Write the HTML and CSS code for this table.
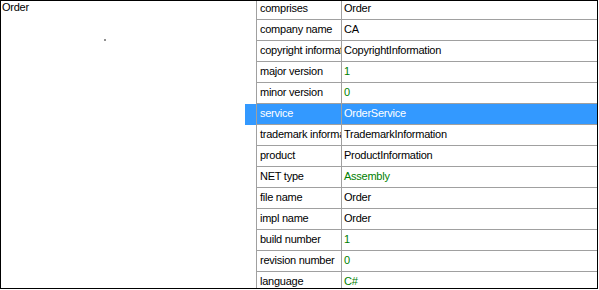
FILE: index.html
```html
<!DOCTYPE html>
<html lang="en">
<head>
    <meta charset="UTF-8">
    <title>Component Properties</title>
    <link rel="stylesheet" href="styles.css">
</head>
<body>
    <div class="frame">
        <!-- Component tree -->
        <div class="tree">
            <div class="tree-item">Order</div>
            <div class="tree-dot"></div>
        </div>

        <!-- Property grid -->
        <div class="grid">
            <div class="rows">
                <div class="row"><div class="gutter"></div><div class="cells"><div class="name">comprises</div><div class="value">Order</div></div></div>
                <div class="row"><div class="gutter"></div><div class="cells"><div class="name">company name</div><div class="value">CA</div></div></div>
                <div class="row"><div class="gutter"></div><div class="cells"><div class="name">copyright information</div><div class="value">CopyrightInformation</div></div></div>
                <div class="row"><div class="gutter"></div><div class="cells"><div class="name">major version</div><div class="value green">1</div></div></div>
                <div class="row"><div class="gutter"></div><div class="cells"><div class="name">minor version</div><div class="value green">0</div></div></div>
                <div class="row selected"><div class="gutter"></div><div class="cells"><div class="name">service</div><div class="value">OrderService</div></div></div>
                <div class="row"><div class="gutter"></div><div class="cells"><div class="name">trademark information</div><div class="value">TrademarkInformation</div></div></div>
                <div class="row"><div class="gutter"></div><div class="cells"><div class="name">product</div><div class="value">ProductInformation</div></div></div>
                <div class="row"><div class="gutter"></div><div class="cells"><div class="name">NET type</div><div class="value green">Assembly</div></div></div>
                <div class="row"><div class="gutter"></div><div class="cells"><div class="name">file name</div><div class="value">Order</div></div></div>
                <div class="row"><div class="gutter"></div><div class="cells"><div class="name">impl name</div><div class="value">Order</div></div></div>
                <div class="row"><div class="gutter"></div><div class="cells"><div class="name">build number</div><div class="value green">1</div></div></div>
                <div class="row"><div class="gutter"></div><div class="cells"><div class="name">revision number</div><div class="value green">0</div></div></div>
                <div class="row"><div class="gutter"></div><div class="cells"><div class="name">language</div><div class="value green">C#</div></div></div>
            </div>
        </div>
    </div>
</body>
</html>
```

FILE: styles.css
```css
/* General Styles */
body {
    margin: 0;
    padding: 0;
    background-color: #ffffff;
    font-family: "Liberation Sans", Arial, sans-serif;
    font-size: 11px;
    letter-spacing: -0.25px;
    color: #000000;
}

.frame {
    display: flex;
    box-sizing: border-box;
    width: 598px;
    height: 289px;
    border: 1px solid #000000;
    background-color: #ffffff;
}

/* Component tree */
.tree {
    width: 244px;
    flex: none;
}

.tree-item {
    padding-left: 1px;
    line-height: 12px;
}

.tree-dot {
    width: 2px;
    height: 2px;
    margin: 26px 0 0 103px;
    background-color: #909090;
}

/* Property grid */
.grid {
    flex: 1;
    overflow: hidden;
}

.rows {
    margin-top: -2px;
}

.row {
    display: flex;
    height: 21px;
}

.gutter {
    width: 11px;
    flex: none;
}

.cells {
    flex: 1;
    display: flex;
    border-left: 1px solid #a0a0a0;
    border-bottom: 1px solid #a0a0a0;
}

.name {
    box-sizing: border-box;
    width: 85px;
    flex: none;
    padding: 3px 0 0 3px;
    border-right: 1px solid #a0a0a0;
    white-space: nowrap;
    overflow: hidden;
}

.value {
    flex: 1;
    padding: 3px 0 0 2px;
    white-space: nowrap;
}

.green {
    color: #008000;
}

.row.selected .gutter,
.row.selected .cells {
    background-color: #3399ff;
    color: #ffffff;
}
```
